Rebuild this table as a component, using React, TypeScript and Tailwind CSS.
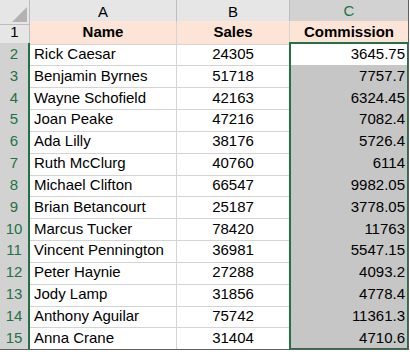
import React from 'react'

const rows = [
  ['Rick Caesar', 24305, '3645.75'],
  ['Benjamin Byrnes', 51718, '7757.7'],
  ['Wayne Schofield', 42163, '6324.45'],
  ['Joan Peake', 47216, '7082.4'],
  ['Ada Lilly', 38176, '5726.4'],
  ['Ruth McClurg', 40760, '6114'],
  ['Michael Clifton', 66547, '9982.05'],
  ['Brian Betancourt', 25187, '3778.05'],
  ['Marcus Tucker', 78420, '11763'],
  ['Vincent Pennington', 36981, '5547.15'],
  ['Peter Haynie', 27288, '4093.2'],
  ['Jody Lamp', 31856, '4778.4'],
  ['Anthony Aguilar', 75742, '11361.3'],
  ['Anna Crane', 31404, '4710.6'],
] as const

const cols = 'grid grid-cols-[30px_147px_113px_118px]'

export default function App() {
  return (
    <div className="w-[410px] h-[352px] overflow-hidden bg-white text-[15px] text-black font-['Liberation_Sans',Arial,sans-serif]">
      <div className="relative w-[409px] h-[350px] border-r border-b border-[#5f5f5f] overflow-hidden">
        {/* column headers */}
        <div className={`${cols} h-[21px] bg-[#e6e6e6]`}>
          <div className="relative border-r border-b border-[#bdbdbd]">
            <div className="absolute right-[2px] bottom-[2px] w-0 h-0 border-l-[15px] border-l-transparent border-b-[15px] border-b-[#b3b3b3]" />
          </div>
          <div className="flex items-center justify-center border-r border-b border-[#bdbdbd]">A</div>
          <div className="flex items-center justify-center border-r border-b border-[#bdbdbd]">B</div>
          <div className="flex items-center justify-center bg-[#d2d2d2] text-[#217346] border-b-2 border-[#217346]">C</div>
        </div>

        {/* header row */}
        <div className={`${cols} h-[21.85px]`}>
          <div className="flex items-center justify-center bg-[#e6e6e6] border-r border-b border-[#bdbdbd]">1</div>
          <div className="flex items-center justify-center font-bold bg-[#fce4d6] border-r border-b border-[#d4d4d4]">Name</div>
          <div className="flex items-center justify-center font-bold bg-[#fce4d6] border-r border-b border-[#d4d4d4]">Sales</div>
          <div className="flex items-center justify-center font-bold bg-[#fce4d6] border-b border-[#d4d4d4]">Commission</div>
        </div>

        {rows.map(([name, sales, comm], i) => (
          <div key={name} className={`${cols} h-[21.85px]`}>
            <div className="flex items-center justify-center bg-[#d2d2d2] text-[#217346] border-r-2 border-r-[#217346] border-b border-b-[#bdbdbd]">
              {i + 2}
            </div>
            <div className="flex items-center px-[4px] border-r border-b border-[#d4d4d4] whitespace-nowrap">{name}</div>
            <div className="flex items-center justify-center border-r border-b border-[#d4d4d4]">{sales}</div>
            <div
              className={`flex items-center justify-end pr-[3px] border-b ${
                i === 0 ? 'bg-white border-[#d4d4d4]' : 'bg-[#c6c6c6] border-[#ababab]'
              }`}
            >
              {comm}
            </div>
          </div>
        ))}

        {/* selection outline C2:C15 */}
        <div className="absolute left-[289px] top-[42px] w-[120px] h-[308px] border-2 border-[#217346] pointer-events-none" />
      </div>
    </div>
  )
}
